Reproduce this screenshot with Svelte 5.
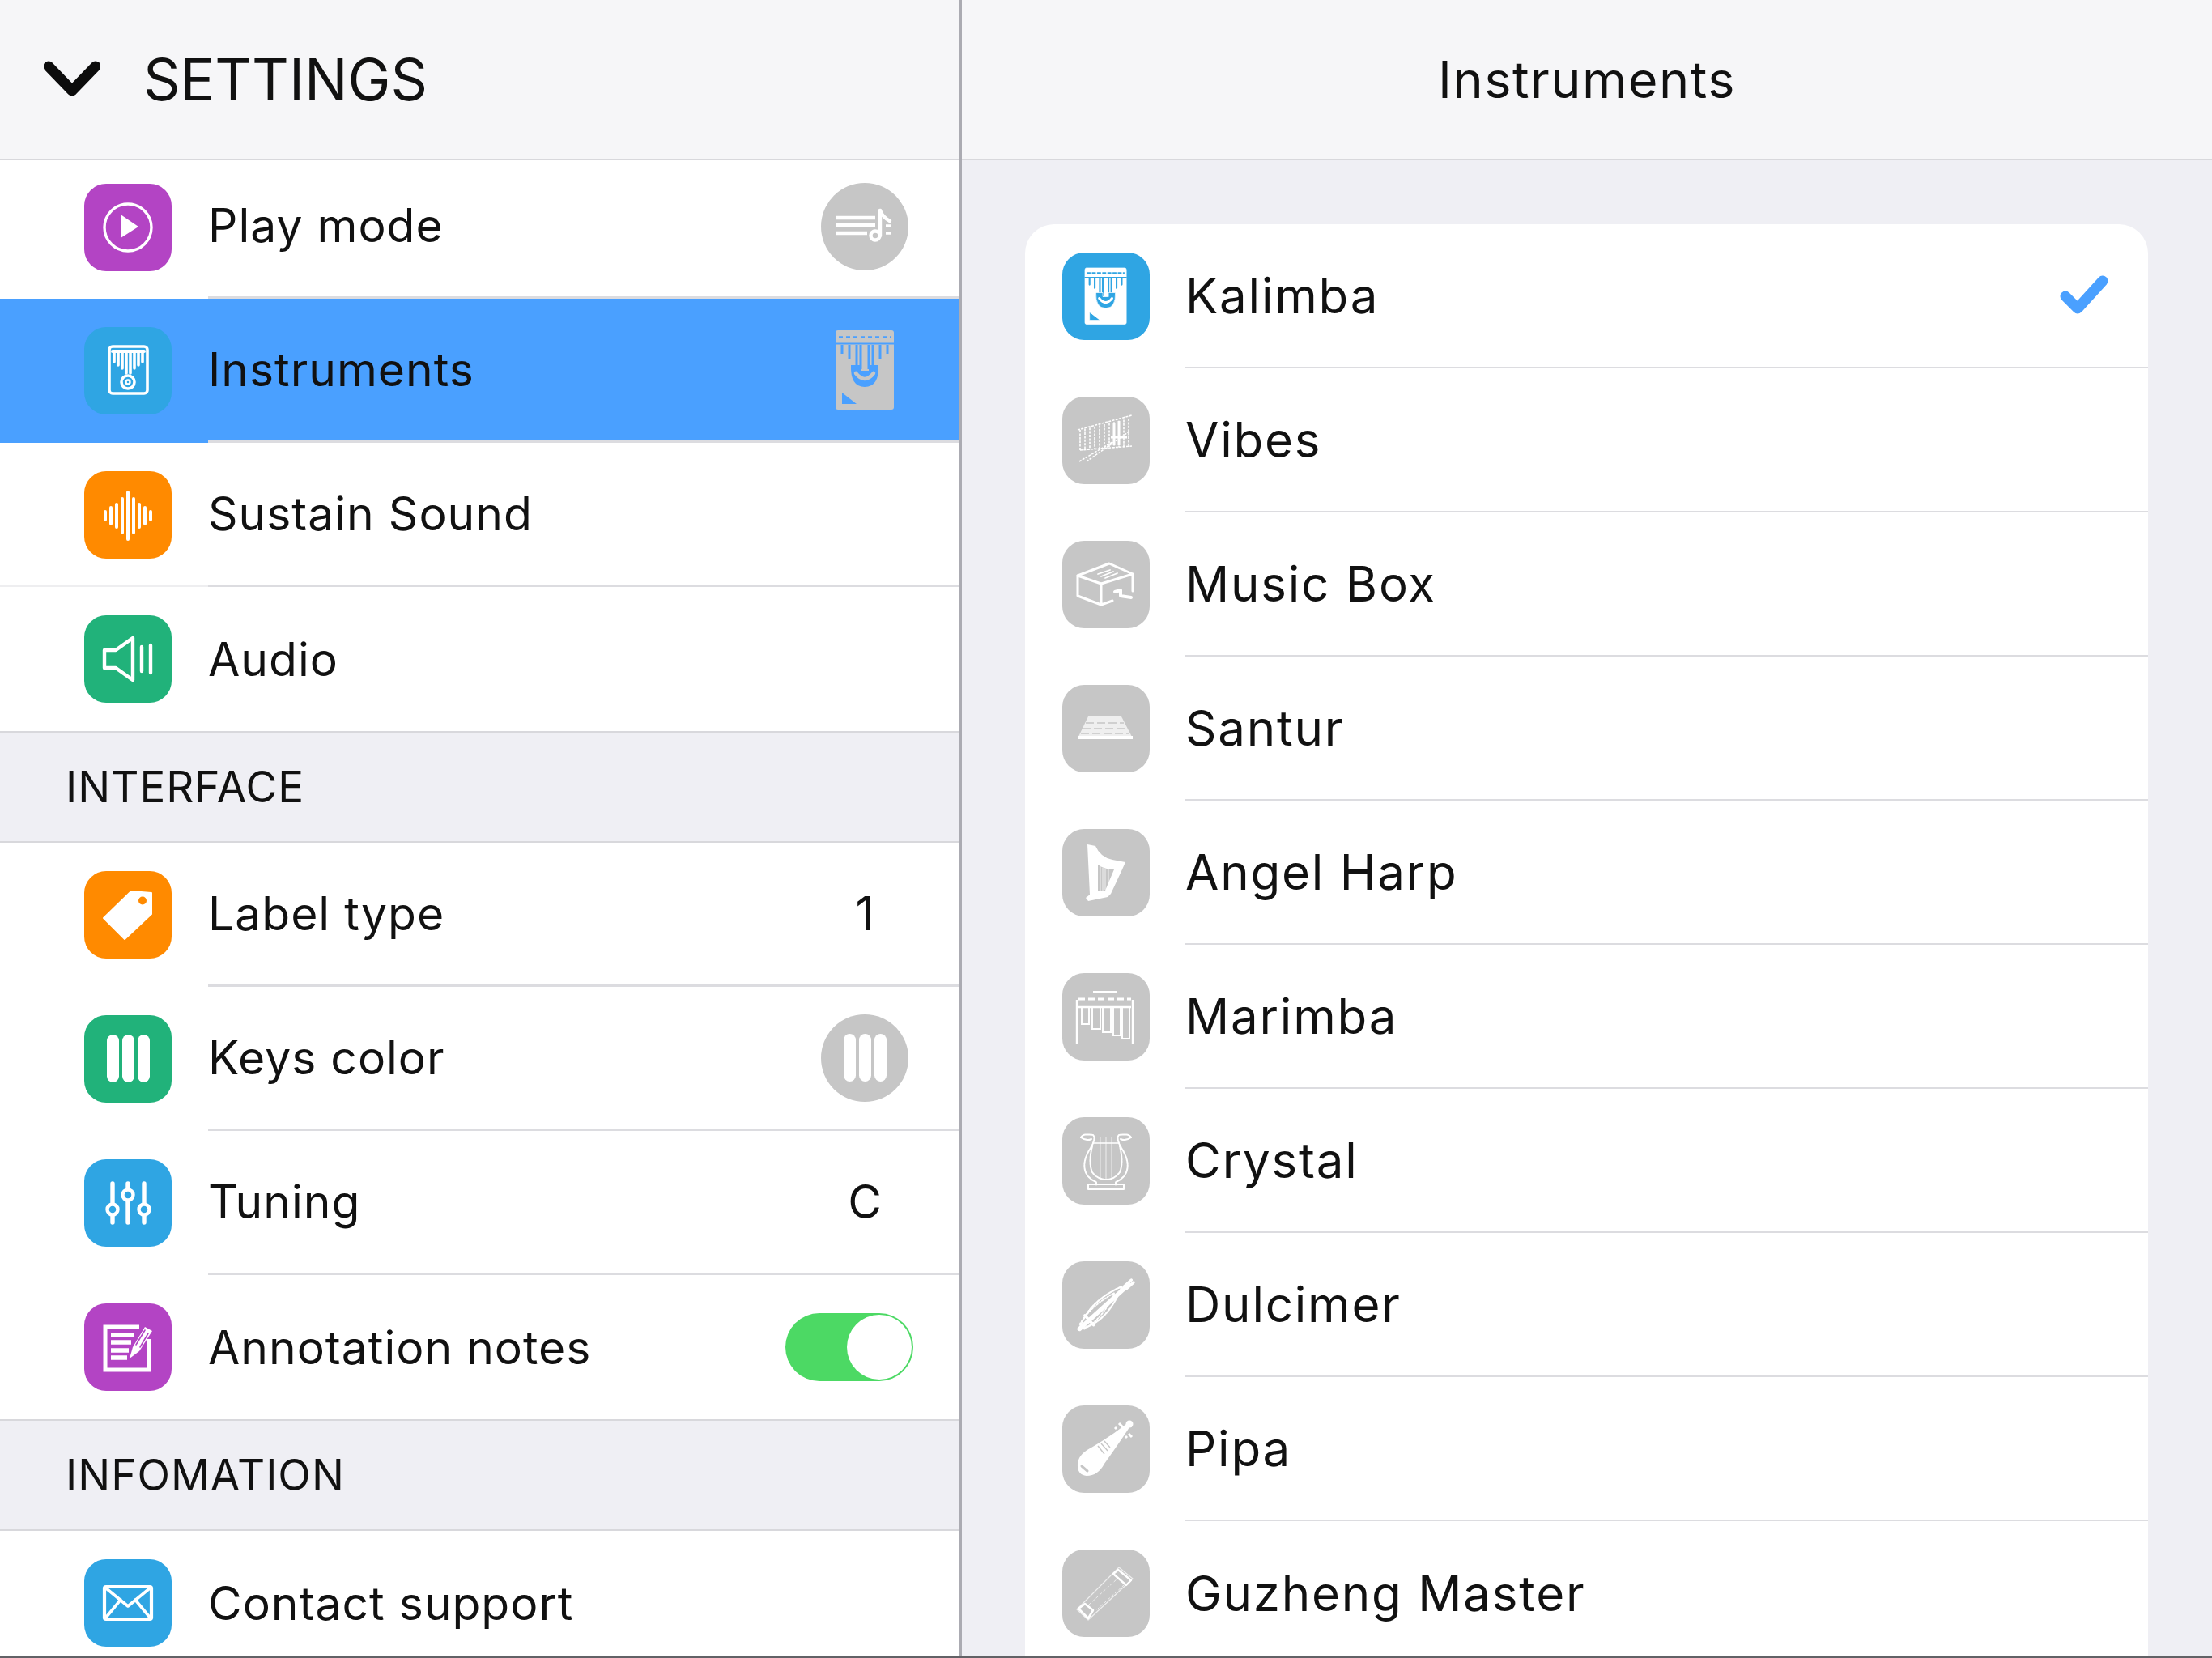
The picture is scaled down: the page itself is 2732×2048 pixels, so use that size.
<script lang="ts">
	type Row = {
		label: string;
		icon: string;
		tone: string;
		value?: string;
		extra?: string;
		selected?: boolean;
		faint?: boolean;
		last?: boolean;
	};

	const settings: Row[] = [
		{ label: 'Play mode', icon: 'play', tone: 'purple', extra: 'mode' },
		{ label: 'Instruments', icon: 'kalimba-line', tone: 'blue', extra: 'kalimba', selected: true },
		{ label: 'Sustain Sound', icon: 'wave', tone: 'orange', faint: true },
		{ label: 'Audio', icon: 'speaker', tone: 'green', last: true }
	];

	const iface: Row[] = [
		{ label: 'Label type', icon: 'tag', tone: 'orange', value: '1' },
		{ label: 'Keys color', icon: 'keys', tone: 'green', extra: 'keys' },
		{ label: 'Tuning', icon: 'sliders', tone: 'blue', value: 'C' },
		{ label: 'Annotation notes', icon: 'notes', tone: 'purple', extra: 'toggle', last: true }
	];

	const info: Row[] = [{ label: 'Contact support', icon: 'mail', tone: 'blue', last: true }];

	const instruments = [
		{ name: 'Kalimba', icon: 'kalimba' },
		{ name: 'Vibes', icon: 'vibes' },
		{ name: 'Music Box', icon: 'box' },
		{ name: 'Santur', icon: 'santur' },
		{ name: 'Angel Harp', icon: 'harp' },
		{ name: 'Marimba', icon: 'marimba' },
		{ name: 'Crystal', icon: 'lyre' },
		{ name: 'Dulcimer', icon: 'dulcimer' },
		{ name: 'Pipa', icon: 'pipa' },
		{ name: 'Guzheng Master', icon: 'guzheng' }
	];

	const waveBars = [5, 10, 14, 21, 29, 21, 14, 10, 5];
	const vibeBars = [22, 28, 34, 40, 46, 52, 58, 64, 70, 76, 82];
	let annotate = $state(true);
</script>

{#snippet kalimba(body: string, cut: string)}
	<rect width="72" height="98" rx="3" fill={body} />
	<path d="M4 8.5H68" stroke={cut} stroke-width="2.5" stroke-dasharray="5 4" />
	<path d="M0 16.5H72" stroke={cut} stroke-width="2" />
	<path
		d="M8 18V29M17 18V35M26 18V44M31 18V48M41 18V48M46 18V44M55 18V35M64 18V29"
		stroke={cut}
		stroke-width="3"
	/>
	<path d="M19 43H31V50H41V43H53Q54 70 36 70Q18 70 19 43Z" fill={cut} />
	<path d="M25 53Q36 67 47 53" fill="none" stroke={body} stroke-width="4.5" stroke-linecap="round" />
	<path d="M8 77V91H26Z" fill={cut} />
{/snippet}

{#snippet glyph(name: string)}
	<svg class="glyph" viewBox="0 0 108 108" fill="none" stroke="#fff" stroke-linecap="round" stroke-linejoin="round">
		{#if name === 'play'}
			<circle cx="54" cy="54" r="29" stroke-width="3.4" />
			<path d="M45 38L67 53L45 67Z" fill="#fff" stroke="none" />
		{:else if name === 'kalimba-line'}
			<rect x="31" y="24" width="47" height="58" rx="4" stroke-width="3.6" />
			<path d="M37 30V43M42 30V47M47 30V51M52 30V57M57 30V57M62 30V51M67 30V47M72 30V43" stroke-width="3.6" />
			<path d="M35 30H74" stroke-width="4" />
			<circle cx="54" cy="68" r="8" stroke-width="3.6" />
			<circle cx="54" cy="68" r="2.5" stroke-width="2.4" />
		{:else if name === 'wave'}
			{#each waveBars as h, i}
				<path d="M{26 + i * 7} {55 - h}V{55 + h}" stroke-width="4" />
			{/each}
		{:else if name === 'speaker'}
			<path d="M25 43H39L60 28V80L39 65H25Z" stroke-width="4.4" />
			<path d="M71 39V69M82 37V71" stroke-width="4.4" />
		{:else if name === 'tag'}
			<path
				d="M24 58L58 25L83 27V53L50 84Z"
				fill="#fff"
				stroke-width="2"
			/>
			<circle cx="72" cy="36.5" r="5" fill="#ff8a00" stroke="none" />
		{:else if name === 'keys'}
			<rect x="28" y="24" width="15" height="59" rx="7.5" fill="#fff" stroke="none" />
			<rect x="47" y="24" width="15" height="59" rx="7.5" fill="#fff" stroke="none" />
			<rect x="66" y="24" width="15" height="59" rx="7.5" fill="#fff" stroke="none" />
		{:else if name === 'sliders'}
			<path d="M35 30V78M54 30V78M74 30V78" stroke-width="5.4" />
			<circle cx="35" cy="62" r="6.5" fill="#2fa5e3" stroke-width="4.4" />
			<circle cx="54" cy="44" r="6.5" fill="#2fa5e3" stroke-width="4.4" />
			<circle cx="74" cy="62" r="6.5" fill="#2fa5e3" stroke-width="4.4" />
		{:else if name === 'notes'}
			<path d="M68 29H26V82H80V44" stroke-width="5" stroke-linecap="butt" stroke-linejoin="miter" />
			<path d="M33 39H61M33 48H58M33 58H55M33 67H53" stroke-width="5.4" stroke-linecap="butt" />
			<path d="M56 68L60 54L75 29L84 34L68 59Z" fill="#fff" stroke="none" />
			<path d="M64 51L75 33M69 54L79 37" stroke="#b344c4" stroke-width="1.6" />
		{:else if name === 'mail'}
			<rect x="25" y="34" width="58" height="40" rx="2" stroke-width="4.2" />
			<path d="M26 35L54 58L82 35M26 73L45 50M82 73L63 50" stroke-width="3.6" />
		{:else if name === 'mode'}
			<path d="M18 43H67M18 52H67M18 62H57" stroke-width="4.4" stroke-linecap="butt" />
			<path d="M73 34V65" stroke-width="4.4" />
			<circle cx="67" cy="65" r="5.5" stroke-width="4.4" />
			<path d="M73 34Q76 42 85 47" stroke-width="4.4" />
			<path d="M80 53H87M80 62H87" stroke-width="3.4" stroke-linecap="butt" />
		{:else if name === 'kalimba'}
			<g transform="translate(28 19) scale(.71)">
				{@render kalimba('#fff', '#2fa5e3')}
			</g>
		{:else if name === 'vibes'}
			<g stroke-width="1.6" stroke-dasharray="3 1.4" stroke-linecap="butt">
				<path d="M19 41L86 23M22 66L86 61" />
				{#each vibeBars as x, i}
					<path d="M{x} {41 - i * 1.4}V{66 - i * 0.4}" />
				{/each}
				<path d="M21 80L62 56M30 80L84 42" />
			</g>
			<path d="M64 32V60M70 30V60M60 50H80" stroke-width="3" stroke-linecap="butt" />
		{:else if name === 'box'}
			<g stroke-width="3">
				<path d="M19 43L58 28L87 41L48 53Z" />
				<path d="M19 43V68L48 79V53M87 41V62M48 79L62 74" />
				<path d="M48 44L63 38M53 46L68 40M44 41L59 36" stroke-width="1.8" />
				<path d="M65 63L72 61V68L85 70" stroke-width="4" />
			</g>
		{:else if name === 'santur'}
			<path d="M32 39H73L87 66H19Z" fill="#fff" fill-opacity=".72" stroke="none" />
			<path d="M19 63H87V67H19Z" fill="#fff" stroke="none" />
			<path d="M29 47H76M25 54H80M23 60H83" stroke="#c6c6c6" stroke-width="1.6" stroke-dasharray="10 4" stroke-linecap="butt" />
		{:else if name === 'harp'}
			<path
				d="M31 19L41 21Q47 35 62 38L78 41L74 50L60 80L56 84L32 89L29 85L34 81ZM44 44V76H53L64 50Q52 50 44 44Z"
				fill="#fff"
				fill-rule="evenodd"
				stroke="none"
			/>
			<path d="M47 46V76M50 48V76M53 49V75M57 50V66" stroke-width="1" stroke-opacity=".75" stroke-linecap="butt" />
		{:else if name === 'marimba'}
			<path d="M38 23H67" stroke-width="2" stroke-linecap="butt" />
			<path d="M18 33V87M87 33V87" stroke-width="2.4" stroke-linecap="butt" />
			<path d="M20 32H85" stroke-width="3" stroke-dasharray="8 4" stroke-linecap="butt" />
			<path d="M20 42H85" stroke-width="2.4" stroke-linecap="butt" />
			<g stroke-width="1.9" stroke-linecap="butt" stroke-linejoin="miter">
				<path d="M24 43V63H33V43M37 43V69H47V43M50 43V73H60V43M63 43V77H72V43M74 43V81H83V43" />
			</g>
		{:else if name === 'lyre'}
			<g stroke-width="2">
				<path d="M23 25Q25 20 38 22Q42 26 35 38Q22 58 31 72Q36 78 42 80V84" stroke-dasharray="3 1" />
				<path d="M85 25Q83 20 70 22Q66 26 73 38Q86 58 77 72Q72 78 66 80V84" stroke-dasharray="3 1" />
				<path d="M23 25Q30 30 36 27M85 25Q78 30 72 27" />
				<path d="M37 36Q32 56 37 68Q44 77 54 77Q64 77 71 68Q76 56 71 36" stroke-dasharray="3 1" />
				<path d="M32 83H76V89H32Z" />
				<path d="M38 32H70" stroke-width="1.4" />
				<path d="M47 25V76M54 25V77M61 25V76" stroke-width="1" stroke-opacity=".7" />
			</g>
		{:else if name === 'dulcimer'}
			<g transform="rotate(-42 54 54)">
				<path d="M10 54Q40 36 84 50Q40 72 10 54Z" stroke-width="2.2" stroke-dasharray="3 1.5" />
				<path d="M14 50Q40 42 72 50Q40 64 14 58Z" stroke-width="1.8" stroke-dasharray="2 2" />
				<path d="M10 54H92" stroke-width="5.5" />
				<path d="M86 52H98M86 56H98" stroke-width="3.5" />
				<path d="M26 46V62" stroke-width="3.5" />
			</g>
		{:else if name === 'pipa'}
			<path d="M79 23L83 27Q72 44 52 72Q44 87 30 87Q18 86 19 72Q20 60 36 52Q60 38 79 23Z" fill="#fff" stroke="none" />
			<circle cx="83" cy="23" r="4.5" fill="#fff" stroke="none" />
			<path d="M44 50L52 60M48 47L56 56M52 44L59 52" stroke="#c6c6c6" stroke-width="1.4" stroke-linecap="butt" />
			<path d="M24 75L31 81" stroke="#c6c6c6" stroke-width="3" />
			<path d="M70 22L75 27M65 27L67 29M82 35L86 39M78 38L80 40" stroke-width="3" stroke-linecap="butt" />
		{:else if name === 'guzheng'}
			<path d="M70 22L87 36L32 87L18 74Z" stroke-width="1.2" stroke-opacity=".7" />
			<path d="M69 25L85 38L79 44L63 30Z" stroke-width="2.4" />
			<path d="M20 73L28 67L38 75L32 85Z" stroke-width="2.6" />
			<path d="M33 68L68 36M43 74L76 44" stroke-width="1" stroke-dasharray="3 3" stroke-opacity=".7" />
		{/if}
	</svg>
{/snippet}

{#snippet settingRow(row: Row)}
	<div class="row" class:selected={row.selected} class:faint={row.faint}>
		<div class="tile {row.tone}">
			{@render glyph(row.icon)}
		</div>
		<div class="row-body" class:last={row.last}>
			<span class="label">{row.label}</span>
			{#if row.value}
				<span class="slot value">{row.value}</span>
			{:else if row.extra === 'toggle'}
				<button class="switch" class:on={annotate} aria-label={row.label} onclick={() => (annotate = !annotate)}>
					<span class="knob"></span>
				</button>
			{:else if row.extra === 'kalimba'}
				<span class="slot">
					<svg class="kalimba-big" viewBox="0 0 72 98" fill="none">
						{@render kalimba('#c6c6c6', '#4aa0ff')}
					</svg>
				</span>
			{:else if row.extra}
				<span class="slot round">
					{@render glyph(row.extra)}
				</span>
			{/if}
		</div>
	</div>
{/snippet}

<div class="screen">
	<div class="panes">
		<aside class="left">
			<header class="top">
				<svg class="chevron" viewBox="0 0 70 44" fill="none">
					<path d="M6 7L35 37L64 7" stroke="#0c0c0c" stroke-width="13" stroke-linecap="round" stroke-linejoin="round" />
				</svg>
				<h1>SETTINGS</h1>
			</header>
			<div class="list">
				{#each settings as row}
					{@render settingRow(row)}
				{/each}
				<div class="section">INTERFACE</div>
				{#each iface as row}
					{@render settingRow(row)}
				{/each}
				<div class="section">INFOMATION</div>
				{#each info as row}
					{@render settingRow(row)}
				{/each}
			</div>
		</aside>

		<main class="right">
			<header class="top center">
				<h2>Instruments</h2>
			</header>
			<div class="card">
				{#each instruments as item, i}
					<div class="item">
						<div class="tile" class:blue={i === 0} class:grey={i !== 0}>
							{@render glyph(item.icon)}
						</div>
						<div class="item-body">
							<span class="label wide">{item.name}</span>
							{#if i === 0}
								<svg class="check" viewBox="0 0 60 52" fill="none">
									<path d="M7 27L22 42L53 8" stroke="#4aa0ff" stroke-width="13" stroke-linecap="round" stroke-linejoin="round" />
								</svg>
							{/if}
						</div>
					</div>
				{/each}
			</div>
		</main>
	</div>
	<div class="edge"></div>
</div>

<style>
	:global(body) {
		margin: 0;
		background: #fff;
	}

	.screen {
		width: 2732px;
		height: 2048px;
		display: flex;
		flex-direction: column;
		overflow: hidden;
		font-family: Inter, "Liberation Sans", sans-serif;
		color: #111;
	}

	.panes {
		flex: 1;
		min-height: 0;
		display: flex;
	}

	.edge {
		height: 3px;
		background: #626266;
	}

	.left {
		width: 1188px;
		box-sizing: border-box;
		border-right: 4px solid #ababb2;
		overflow: hidden;
	}

	.right {
		flex: 1;
		background: #efeff4;
		overflow: hidden;
	}

	.top {
		position: relative;
		z-index: 1;
		height: 198px;
		box-sizing: border-box;
		display: flex;
		align-items: center;
		padding-left: 54px;
		background: #f6f6f8;
		border-bottom: 2px solid #d8d8dc;
	}

	.top.center {
		justify-content: center;
		padding-left: 0;
	}

	h1 {
		margin: 0 0 0 53px;
		font-size: 71px;
		font-weight: 400;
	}

	h2 {
		margin: 0;
		font-size: 63px;
		font-weight: 400;
		letter-spacing: 1.5px;
	}

	.chevron {
		width: 70px;
		height: 44px;
		margin-top: -2px;
	}

	.list {
		margin-top: -7px;
	}

	.row {
		height: 178px;
		display: flex;
		align-items: center;
		padding-left: 104px;
		background: #fff;
	}

	.row:first-child .tile,
	.row:first-child .slot {
		margin-top: 2px;
	}

	.row.selected {
		background: #4aa0ff;
	}

	.row.faint {
		box-shadow: inset 0 -2px 0 #eeeef0;
	}

	.tile {
		flex: none;
		width: 108px;
		height: 108px;
		border-radius: 27px;
	}

	.glyph {
		display: block;
		width: 108px;
		height: 108px;
	}

	.purple { background: #b344c4; }
	.blue { background: #2fa5e3; }
	.orange { background: #ff8a00; }
	.green { background: #21b27a; }
	.grey { background: #c6c6c6; }

	.row-body {
		flex: 1;
		align-self: stretch;
		margin-left: 45px;
		display: flex;
		align-items: center;
		justify-content: space-between;
		box-sizing: border-box;
		border-bottom: 3px solid #dcdce0;
	}

	.row-body.last {
		border-bottom: none;
	}

	.label {
		font-size: 57px;
		font-weight: 400;
		letter-spacing: 1px;
	}

	.label.wide {
		font-size: 60px;
		letter-spacing: 1.8px;
	}

	.slot {
		width: 108px;
		height: 108px;
		margin-right: 62px;
		display: flex;
		align-items: center;
		justify-content: center;
		flex: none;
	}

	.slot.round {
		border-radius: 50%;
		background: #c6c6c6;
	}

	.value {
		font-size: 57px;
	}

	.kalimba-big {
		width: 72px;
		height: 98px;
	}

	.switch {
		width: 158px;
		height: 84px;
		margin-right: 56px;
		padding: 2px;
		box-sizing: border-box;
		border: none;
		border-radius: 42px;
		background: #4cd964;
		display: flex;
		justify-content: flex-end;
	}

	.knob {
		width: 80px;
		height: 80px;
		border-radius: 50%;
		background: #fff;
	}

	.section {
		height: 138px;
		box-sizing: border-box;
		display: flex;
		align-items: center;
		padding-left: 81px;
		background: #efeff4;
		border-top: 2px solid #d8d8dc;
		border-bottom: 2px solid #d8d8dc;
		font-size: 53px;
		font-weight: 400;
		letter-spacing: 1px;
	}

	.card {
		margin: 79px 79px 0 78px;
		background: #fff;
		border-radius: 36px 36px 0 0;
		height: 1768px;
		overflow: hidden;
	}

	.item {
		height: 178px;
		display: flex;
		align-items: center;
		padding-left: 46px;
	}

	.item-body {
		flex: 1;
		align-self: stretch;
		margin-left: 44px;
		display: flex;
		align-items: center;
		justify-content: space-between;
		box-sizing: border-box;
		border-bottom: 2px solid #dcdce0;
	}

	.item:last-child .item-body {
		border-bottom: none;
	}

	.check {
		width: 60px;
		height: 52px;
		margin-right: 49px;
	}
</style>
